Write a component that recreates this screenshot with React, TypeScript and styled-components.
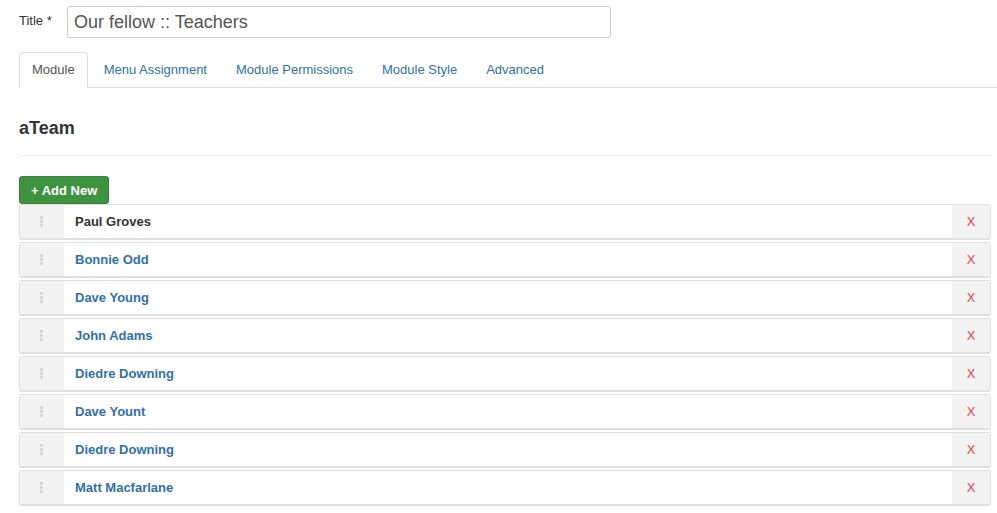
import React from 'react';
import styled, { createGlobalStyle } from 'styled-components';

const GlobalStyle = createGlobalStyle`
  html, body {
    margin: 0;
    padding: 0;
    background: #fff;
    font-family: "Liberation Sans", Arial, sans-serif;
    font-size: 13px;
    color: #333;
    overflow: hidden;
  }
`;

const Page = styled.div`
  padding: 6px 0 0 19px;
`;

const TitleRow = styled.div`
  display: flex;
  align-items: flex-start;
`;

const Label = styled.label`
  width: 48px;
  font-size: 13px;
  line-height: 15px;
  padding-top: 7px;
  color: #333;
`;

const TitleInput = styled.input`
  box-sizing: border-box;
  width: 544px;
  height: 32px;
  padding: 0 6px;
  border: 1px solid #ccc;
  border-radius: 3px;
  font-family: inherit;
  font-size: 18px;
  color: #555;
  outline: none;
`;

const Tabs = styled.ul`
  display: flex;
  list-style: none;
  margin: 14px 0 0;
  padding: 0;
  border-bottom: 1px solid #ddd;
`;

const Tab = styled.li<{ $active?: boolean }>`
  height: 34px;
  line-height: 34px;
  padding: 0 12px;
  margin-right: 3px;
  margin-bottom: -1px;
  border: 1px solid ${({ $active }) => ($active ? '#ddd' : 'transparent')};
  border-bottom-color: ${({ $active }) => ($active ? '#fff' : 'transparent')};
  border-radius: 4px 4px 0 0;
  background: ${({ $active }) => ($active ? '#fff' : 'transparent')};
  color: ${({ $active }) => ($active ? '#555' : '#3071a9')};
  font-size: 13px;
  cursor: pointer;
`;

const Content = styled.div`
  margin-right: 6px;
`;

const Heading = styled.h3`
  margin: 29px 0 0;
  font-size: 18px;
  line-height: 22px;
  font-weight: bold;
  color: #333;
`;

const Divider = styled.hr`
  margin: 16px 0 20px;
  border: 0;
  border-top: 1px solid #eee;
`;

const AddButton = styled.button`
  display: block;
  height: 28px;
  padding: 0 11px;
  border: 1px solid #378137;
  border-radius: 3px;
  background: #3f923f;
  color: #fff;
  font-family: inherit;
  font-size: 13px;
  font-weight: bold;
  cursor: pointer;
`;

const List = styled.div`
  display: flex;
  flex-direction: column;
  gap: 2px;
`;

const Row = styled.div`
  display: flex;
  height: 33px;
  border: 1px solid #e0e0e0;
  border-bottom-width: 2px;
  border-radius: 3px;
  overflow: hidden;
  background: #fff;
`;

const Handle = styled.div`
  width: 44px;
  display: flex;
  align-items: center;
  justify-content: center;
  background: #f3f3f3;
`;

const Grip = styled.span`
  display: flex;
  flex-direction: column;
  gap: 1px;
  padding-right: 1px;

  & > i {
    display: block;
    width: 3px;
    height: 3px;
    background: #d6d6d6;
  }
`;

const Name = styled.a<{ $plain?: boolean }>`
  flex: 1;
  display: flex;
  align-items: center;
  padding-left: 11px;
  font-weight: bold;
  font-size: 13px;
  color: ${({ $plain }) => ($plain ? '#333' : '#3071a9')};
  text-decoration: none;
`;

const Remove = styled.div`
  width: 38px;
  display: flex;
  align-items: center;
  justify-content: center;
  background: #f3f3f3;
  color: #e8403f;
  font-size: 13px;
`;

const tabs = ['Module', 'Menu Assignment', 'Module Permissions', 'Module Style', 'Advanced'];

const members = [
  'Paul Groves',
  'Bonnie Odd',
  'Dave Young',
  'John Adams',
  'Diedre Downing',
  'Dave Yount',
  'Diedre Downing',
  'Matt Macfarlane',
];

const App: React.FC = () => {
  return (
    <>
      <GlobalStyle />
      <Page>
        <TitleRow>
          <Label>Title *</Label>
          <TitleInput defaultValue="Our fellow :: Teachers" />
        </TitleRow>

        <Tabs>
          {tabs.map((t, i) => (
            <Tab key={t} $active={i === 0}>
              {t}
            </Tab>
          ))}
        </Tabs>

        <Content>
          <Heading>aTeam</Heading>
          <Divider />
          <AddButton>+ Add New</AddButton>
          <List>
            {members.map((name, i) => (
              <Row key={i}>
                <Handle>
                  <Grip>
                    <i />
                    <i />
                    <i />
                  </Grip>
                </Handle>
                <Name $plain={i === 0}>{name}</Name>
                <Remove>X</Remove>
              </Row>
            ))}
          </List>
        </Content>
      </Page>
    </>
  );
};

export default App;
